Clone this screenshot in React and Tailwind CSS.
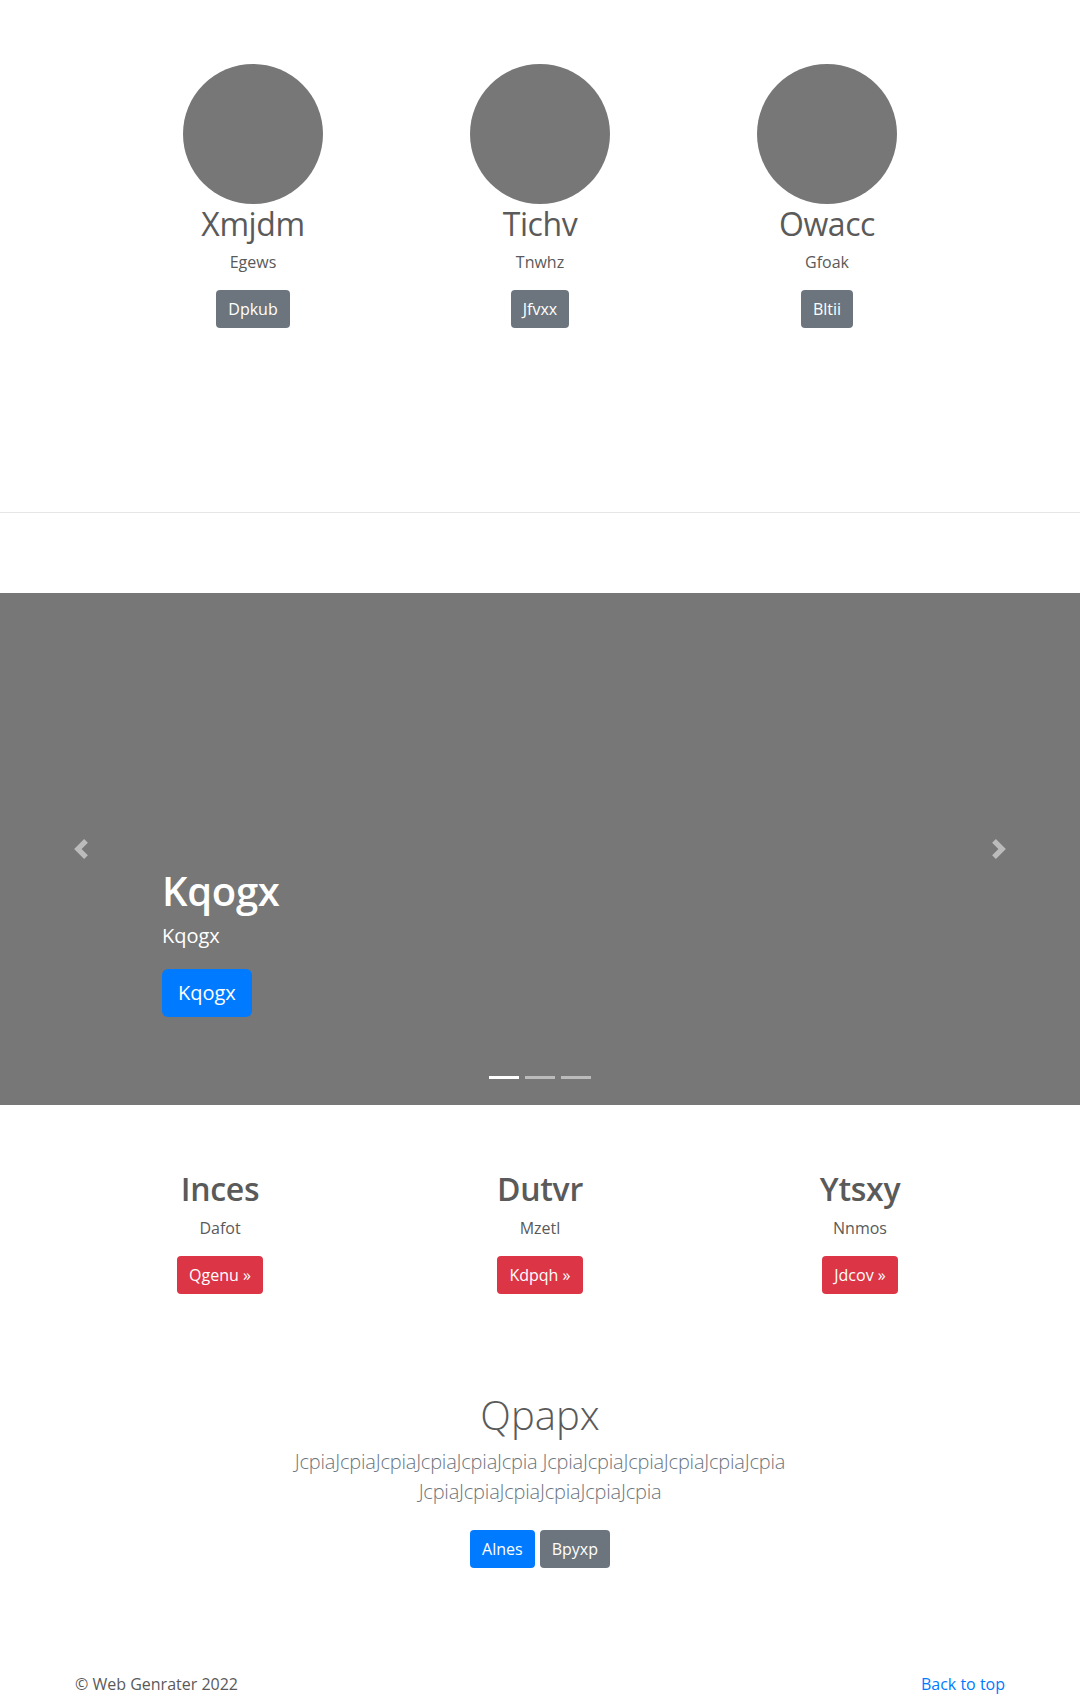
import React from "react";

const people = [
  { name: "Xmjdm", sub: "Egews", btn: "Dpkub" },
  { name: "Tichv", sub: "Tnwhz", btn: "Jfvxx" },
  { name: "Owacc", sub: "Gfoak", btn: "Bltii" },
];

const cols = [
  { name: "Inces", sub: "Dafot", btn: "Qgenu" },
  { name: "Dutvr", sub: "Mzetl", btn: "Kdpqh" },
  { name: "Ytsxy", sub: "Nnmos", btn: "Jdcov" },
];

export default function App() {
  return (
    <div className="w-[1080px] h-[1696px] overflow-hidden bg-white text-[#5a5a5a] font-['Open_Sans','Liberation_Sans',sans-serif]">
      {/* Team row */}
      <div className="flex justify-center pt-[64px]">
        {people.map((p) => (
          <div key={p.name} className="w-[287px] flex flex-col items-center text-center">
            <div className="w-[140px] h-[140px] rounded-full bg-[#777777]" />
            <h2 className="mt-[2px] mb-2 text-[32px] leading-[36px] font-normal tracking-[-0.4px]">{p.name}</h2>
            <p className="mb-4 text-[16px] leading-6">{p.sub}</p>
            <a className="inline-block rounded-[4px] bg-[#6c757d] px-3 py-[7px] text-[16px] leading-6 text-white">
              {p.btn}
            </a>
          </div>
        ))}
      </div>

      <div className="mt-[184px] border-t border-[#e6e6e6]" />

      {/* Carousel */}
      <div className="relative mt-[80px] h-[512px] bg-[#777777] flex flex-col justify-end pl-[162px] pb-[88px] text-white">
        <h1 className="mb-[6px] text-[40px] leading-[48px] font-semibold tracking-[-0.3px]">Kqogx</h1>
        <p className="mb-[18px] text-[20px] leading-[30px] font-normal">Kqogx</p>
        <div>
          <a className="inline-block rounded-[6px] bg-[#007bff] px-4 py-2 text-[20px] leading-[32px] text-white">Kqogx</a>
        </div>

        <div className="absolute left-0 top-0 bottom-0 w-[162px] flex items-center justify-center opacity-50">
          <svg width="20" height="20" viewBox="0 0 8 8" fill="#fff">
            <path d="M5.25 0l-4 4 4 4 1.5-1.5L4.25 4l2.5-2.5L5.25 0z" />
          </svg>
        </div>
        <div className="absolute right-0 top-0 bottom-0 w-[162px] flex items-center justify-center opacity-50">
          <svg width="20" height="20" viewBox="0 0 8 8" fill="#fff">
            <path d="M2.75 0l-1.5 1.5L3.75 4l-2.5 2.5L2.75 8l4-4-4-4z" />
          </svg>
        </div>

        <div className="absolute left-0 right-0 bottom-[26px] flex justify-center gap-[6px]">
          <span className="block w-[30px] h-[3px] bg-white" />
          <span className="block w-[30px] h-[3px] bg-white/50" />
          <span className="block w-[30px] h-[3px] bg-white/50" />
        </div>
      </div>

      {/* Marketing columns */}
      <div className="flex justify-center pt-[65px]">
        {cols.map((c) => (
          <div key={c.name} className="w-[320px] flex flex-col items-center text-center">
            <h2 className="mb-2 text-[32px] leading-[38px] font-semibold tracking-[-0.3px]">{c.name}</h2>
            <p className="mb-4 text-[16px] leading-6">{c.sub}</p>
            <a className="inline-block rounded-[4px] bg-[#dc3545] px-3 py-[7px] text-[16px] leading-6 text-white">
              {c.btn} »
            </a>
          </div>
        ))}
      </div>

      {/* Jumbotron */}
      <div className="pt-[97px] flex flex-col items-center text-center">
        <h1 className="mb-2 text-[40px] leading-[48px] font-light">Qpapx</h1>
        <p className="mb-4 w-[600px] text-[20px] leading-[30px] font-light tracking-[-0.2px] text-[#6c757d]">
          JcpiaJcpiaJcpiaJcpiaJcpiaJcpia JcpiaJcpiaJcpiaJcpiaJcpiaJcpia JcpiaJcpiaJcpiaJcpiaJcpiaJcpia
        </p>
        <div className="flex gap-[5px] mt-[7px]">
          <a className="inline-block rounded-[4px] bg-[#007bff] px-3 py-[7px] text-[16px] leading-6 text-white">Alnes</a>
          <a className="inline-block rounded-[4px] bg-[#6c757d] px-3 py-[7px] text-[16px] leading-6 text-white">Bpyxp</a>
        </div>
      </div>

      {/* Footer */}
      <div className="mx-auto mt-[104px] w-[960px] px-[15px] flex justify-between text-[16px] leading-6">
        <p>© Web Genrater 2022</p>
        <a className="text-[#007bff]">Back to top</a>
      </div>
    </div>
  );
}
